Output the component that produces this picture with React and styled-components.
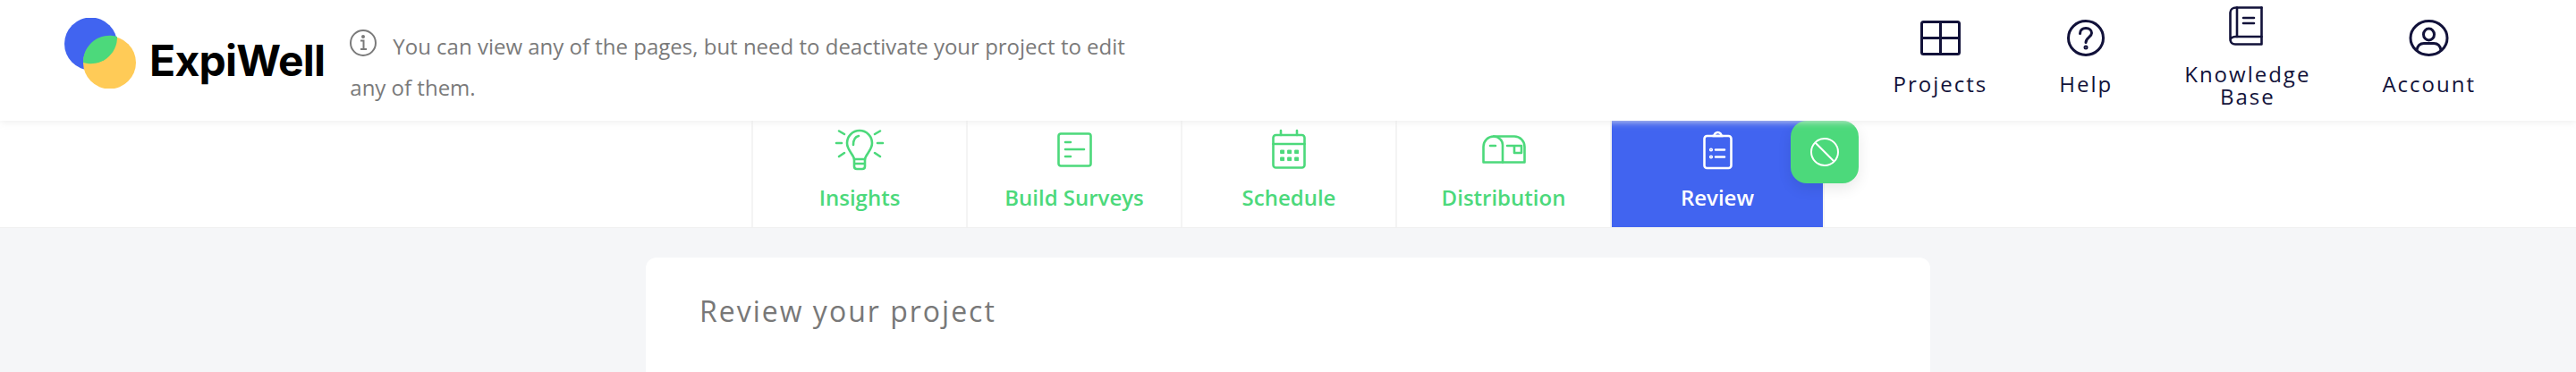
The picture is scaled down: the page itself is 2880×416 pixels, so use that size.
import React from 'react'
import styled, { createGlobalStyle } from 'styled-components'

const GREEN = '#4cd97b'
const BLUE = '#4164f0'
const DARK = '#12123a'

const GlobalStyle = createGlobalStyle`
  html, body {
    margin: 0;
    height: 416px;
    overflow: hidden;
    background: #f5f6f8;
    font-family: "Open Sans", "Liberation Sans", sans-serif;
  }
`

const Header = styled.header`
  position: relative;
  z-index: 2;
  display: flex;
  align-items: flex-start;
  height: 135px;
  padding-left: 72px;
  background: white;
  box-shadow: 0 1px 8px rgba(232, 232, 232, 0.85);
`

const Logo = styled.div`
  display: flex;
  align-items: center;
  gap: 15px;
  margin-top: 20px;
  height: 79px;
`

const LogoName = styled.span`
  font-family: Inter, "Liberation Sans", sans-serif;
  font-weight: 700;
  font-size: 48px;
  letter-spacing: -0.75px;
  color: #000;
  margin-top: 16px;
`

const Notice = styled.p`
  width: 880px;
  margin: 29px 0 0 28px;
  font-size: 24px;
  line-height: 46px;
  color: #7a7a7a;
`

const InfoWrap = styled.span`
  display: inline-block;
  width: 48px;
  height: 30px;
  vertical-align: -2px;
`

const TopNav = styled.nav`
  display: flex;
  align-items: center;
  gap: 80px;
  height: 128px;
  margin-left: auto;
  padding-right: 112px;
`

const TopItem = styled.a`
  display: flex;
  flex-direction: column;
  align-items: center;
  text-align: center;
  font-size: 24px;
  line-height: 25px;
  letter-spacing: 2px;
  color: ${DARK};

  svg {
    display: block;
    margin-bottom: 18px;
  }
`

const TabBar = styled.nav`
  display: flex;
  justify-content: center;
  height: 119px;
  background: white;
  border-bottom: 1px solid #f0f0f0;
`

const Tab = styled.a`
  position: relative;
  display: flex;
  flex-direction: column;
  align-items: center;
  width: 240px;
  padding-top: 4px;
  box-sizing: border-box;
  border-left: 2px solid #f4f4f4;
  border-right: ${props => (props.$active ? '2px solid #f4f4f4' : 'none')};
  font-size: 24px;
  font-weight: 600;
  color: ${props => (props.$active ? 'white' : GREEN)};
  background: ${props => (props.$active ? BLUE : 'transparent')};
  background-clip: padding-box;
`

const TabIcon = styled.div`
  display: flex;
  align-items: center;
  justify-content: center;
  height: 56px;
  margin-bottom: 9px;
`

const BanButton = styled.button`
  position: absolute;
  top: 0;
  right: -40px;
  display: flex;
  align-items: center;
  justify-content: center;
  width: 76px;
  height: 70px;
  padding: 0;
  border: none;
  border-radius: 18px;
  background: ${GREEN};
  box-shadow: 0 6px 16px rgba(0, 0, 0, 0.09);
`

const Main = styled.main`
  display: flex;
  justify-content: center;
  padding-top: 33px;
`

const Card = styled.section`
  width: 1436px;
  height: 128px;
  padding: 38px 60px;
  box-sizing: border-box;
  background: white;
  border-radius: 12px 12px 0 0;
`

const CardTitle = styled.h2`
  margin: 0;
  font-size: 32px;
  font-weight: 400;
  line-height: 44px;
  letter-spacing: 2px;
  color: #787878;
`

const Line = props => (
  <svg fill="none" stroke="currentColor" strokeWidth="2.6" strokeLinecap="round" strokeLinejoin="round" overflow="visible" {...props} />
)

const ProjectsIcon = () => (
  <Line width="45" height="41" viewBox="0 0 45 41" strokeWidth="3">
    <rect x="1.5" y="2.5" width="42" height="36" rx="2" />
    <path d="M22.5 2.5V38.5M1.5 20.5H43.5" />
  </Line>
)

const HelpIcon = () => (
  <Line width="42" height="41" viewBox="0 0 42 41" strokeWidth="3">
    <ellipse cx="21" cy="20.5" rx="19.5" ry="19" />
    <path d="M14.5 15.5C14.5 11.5 17.5 9.5 21 9.5C25 9.5 27.5 12 27.5 15C27.5 19.5 21 20 21 25.5" />
    <circle cx="21" cy="31" r="1" />
  </Line>
)

const BookIcon = () => (
  <Line width="38" height="44" viewBox="2 1 38 44" strokeWidth="2.6">
    <path d="M36.5 1.5H8C4 1.5 1.5 4 1.5 7V37C1.5 40.5 4 42.5 7 42.5H36.5V34H7C3.5 34 1.5 36 1.5 38" />
    <path d="M36.5 1.5V34M9 1.5V34M16 13H28M16 19H28" />
  </Line>
)

const AccountIcon = () => (
  <Line width="45" height="41" viewBox="0 0 45 41" strokeWidth="3">
    <ellipse cx="22.5" cy="20.5" rx="20.5" ry="19" />
    <ellipse cx="22.5" cy="16.5" rx="6" ry="6.5" />
    <path d="M9 34C10 28 14 26.5 17 26.5H28C31 26.5 35 28 36 34" />
  </Line>
)

const BulbIcon = () => (
  <Line width="55" height="45" viewBox="0 0 55 45">
    <path d="M21 33C20 27 13 23 13 15A14 14 0 0 1 41 15C41 23 34 27 33 33Z" />
    <path d="M21 33V41Q21 44 24 44H30Q33 44 33 41V33M21 38H33M20 17C20 12 22 8 26 7" />
    <path d="M1 15H7M47 15H53M4 1.5L10 5M50 1.5L44 5M4 30L10 26M50 30L44 26" />
  </Line>
)

const DocIcon = () => (
  <Line width="39" height="39" viewBox="0 0 39 39">
    <rect x="1.5" y="1.5" width="36" height="36" rx="2.5" />
    <path d="M9 11H15M9 19H30M9 27H15" />
  </Line>
)

const CalendarIcon = () => (
  <Line width="38" height="44" viewBox="0 0 38 44">
    <rect x="1.5" y="6" width="35" height="36.5" rx="3" />
    <path d="M1.5 16H36.5M10 1V6M28 1V6" />
    {[11, 19, 27].map(x =>
      [25, 33].map(y => <rect key={`${x}-${y}`} x={x - 1} y={y - 2} width="3.6" height="3.6" fill="currentColor" strokeWidth="1" />)
    )}
  </Line>
)

const MailboxIcon = () => (
  <Line width="49" height="32" viewBox="0 0 49 32">
    <path d="M1.5 30.5V13A11.5 11.5 0 0 1 13 1.5H36A11.5 11.5 0 0 1 47.5 13V30.5Z" />
    <path d="M23 30.5V11C23 6 19 2 13 1.5M9 12H15M28 12H44V20H36V12" />
  </Line>
)

const ClipboardIcon = () => (
  <Line width="33" height="43" viewBox="0 0 33 43">
    <rect x="1.5" y="6" width="30" height="36" rx="3" />
    <path d="M11 6H22M12.5 6A4 4 0 1 1 20.5 6M14 21.5H24M14 29.5H24" />
    <circle cx="9" cy="21.5" r="0.8" />
    <circle cx="9" cy="29.5" r="0.8" />
  </Line>
)

const tabs = [
  { label: 'Insights', Icon: BulbIcon },
  { label: 'Build Surveys', Icon: DocIcon },
  { label: 'Schedule', Icon: CalendarIcon },
  { label: 'Distribution', Icon: MailboxIcon },
  { label: 'Review', Icon: ClipboardIcon, active: true },
]

const topLinks = [
  { label: 'Projects', Icon: ProjectsIcon },
  { label: 'Help', Icon: HelpIcon },
  { label: <>Knowledge<br />Base</>, Icon: BookIcon },
  { label: 'Account', Icon: AccountIcon },
]

const App = () => (
  <>
    <GlobalStyle />
    <Header>
      <Logo>
        <svg width="80" height="79" viewBox="0 0 80 79">
          <circle cx="29.5" cy="29" r="29.5" fill="#4164f0" />
          <circle cx="50.5" cy="50" r="29.5" fill="#ffcb57" />
          <path d="M21 50A29.5 29.5 0 0 1 59 21A29.5 29.5 0 0 1 21 50Z" fill="#4cd97b" />
        </svg>
        <LogoName>ExpiWell</LogoName>
      </Logo>
      <Notice>
        <InfoWrap>
          <svg width="30" height="30" viewBox="0 0 30 30" fill="none" stroke="#7a7a7a" strokeWidth="2">
            <circle cx="15" cy="15" r="14" />
            <path d="M12 12.5H15.5V22M12 22H19" />
            <circle cx="15" cy="8" r="1" fill="#7a7a7a" />
          </svg>
        </InfoWrap>
        You can view any of the pages, but need to deactivate your project to edit any of them.
      </Notice>
      <TopNav>
        {topLinks.map(({ label, Icon }, i) => (
          <TopItem key={i}>
            <Icon />
            {label}
          </TopItem>
        ))}
      </TopNav>
    </Header>
    <TabBar>
      {tabs.map(({ label, Icon, active }) => (
        <Tab key={label} $active={active}>
          <TabIcon><Icon /></TabIcon>
          {label}
          {active && (
            <BanButton aria-label="Deactivate">
              <svg width="32" height="32" viewBox="0 0 32 32" fill="none" stroke="white" strokeWidth="2">
                <circle cx="16" cy="16" r="15" />
                <path d="M5.5 5.5L26.5 26.5" />
              </svg>
            </BanButton>
          )}
        </Tab>
      ))}
    </TabBar>
    <Main>
      <Card>
        <CardTitle>Review your project</CardTitle>
      </Card>
    </Main>
  </>
)

export default App
